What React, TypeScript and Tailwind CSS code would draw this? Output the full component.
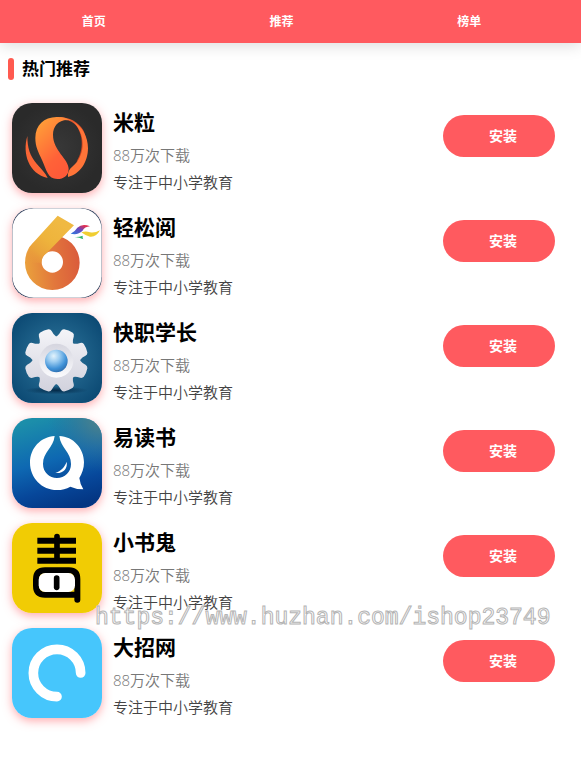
import type { ReactNode } from "react";

interface AppItem {
  name: string;
  downloads: string;
  description: string;
  icon: ReactNode;
}

const gearTeeth = [22.5, 67.5, 112.5, 157.5, 202.5, 247.5, 292.5, 337.5];

const MiliIcon = () => (
  <svg viewBox="12 15 270 270" className="size-full" aria-hidden="true">
    <defs>
      <radialGradient id="mili-bg">
        <stop offset="0" stopColor="#383838" />
        <stop offset="1" stopColor="#2a2a2a" />
      </radialGradient>
      <linearGradient id="mili-blob" x1="0.1" y1="0.1" x2="0.6" y2="1">
        <stop offset="0" stopColor="#ff9d38" />
        <stop offset="0.7" stopColor="#ff6238" />
        <stop offset="1" stopColor="#ff5a38" />
      </linearGradient>
      <linearGradient id="mili-ring" x1="0" y1="0" x2="1" y2="0.3">
        <stop offset="0" stopColor="#ff7a38" />
        <stop offset="0.6" stopColor="#e0522a" />
        <stop offset="1" stopColor="#cf431f" />
      </linearGradient>
    </defs>
    <rect x="12" y="15" width="270" height="270" fill="url(#mili-bg)" />
    <path d="M150 57C185 57 211 72 226 97C236 114 234 160 216 182L205 191C219 170 224 145 220 120C215 92 200 67 172 66Z" fill="url(#mili-ring)" />
    <path d="M196 71C223 84 240 117 240 150C240 192 216 228 180 237C179 222 184 213 195 204C228 177 239 116 196 71Z" fill="#ff7438" />
    <path d="M146 57C160 56 174 59 187 67C154 62 135 84 135 110C135 158 182 183 182 212C182 232 167 243 148 243C119 243 116 216 102 186C91 162 82 146 82 120C82 81 108 58 146 57Z" fill="url(#mili-blob)" />
    <path d="M58 114C42 168 63 227 119 240C112 224 100 213 86 197C66 174 58 150 58 114Z" fill="#fa6636" />
  </svg>
);

const QingsongIcon = () => (
  <svg viewBox="36 24 270 270" className="size-full" aria-hidden="true">
    <defs>
      <linearGradient id="six-ring" x1="0" y1="0.5" x2="1" y2="0.4">
        <stop offset="0" stopColor="#eaa03c" />
        <stop offset="0.5" stopColor="#e2773c" />
        <stop offset="1" stopColor="#da5b3c" />
      </linearGradient>
      <linearGradient id="six-stem" x1="88" y1="190" x2="180" y2="70" gradientUnits="userSpaceOnUse">
        <stop offset="0" stopColor="#e9983b" stopOpacity="0" />
        <stop offset="0.28" stopColor="#eaa33b" />
        <stop offset="0.6" stopColor="#eeb43c" />
        <stop offset="1" stopColor="#f0b942" />
      </linearGradient>
      <linearGradient id="six-wing" x1="0" y1="1" x2="1" y2="0">
        <stop offset="0" stopColor="#2d7be0" />
        <stop offset="0.5" stopColor="#6a49bd" />
        <stop offset="0.8" stopColor="#e02d50" />
      </linearGradient>
    </defs>
    <rect x="36" y="24" width="270" height="270" rx="60" fill="#3b4964" />
    <rect x="37" y="25" width="268" height="268" rx="64" fill="#fff" />
    <path fillRule="evenodd" d="M157 106A82 82 0 1 0 157 270A82 82 0 1 0 157 106ZM157 154A32 32 0 1 1 157 218A32 32 0 1 1 157 154Z" fill="url(#six-ring)" />
    <path d="M173 47L222 76L138 161Q124 170 125 188L75 188Q75 153 96 132Z" fill="url(#six-stem)" />
    <path d="M212 101Q224 96 232 83Q247 69 270 79Q254 80 247 93Q234 106 212 101Z" fill="url(#six-wing)" />
    <path d="M244 97Q258 92 270 97Q284 100 300 91Q289 112 270 110Q256 107 244 97Z" fill="#f0ce31" />
    <path d="M224 111Q237 112 248 107Q247 114 250 118Q238 112 224 111Z" fill="#2bb36b" />
  </svg>
);

const GearIcon = () => (
  <svg viewBox="36 24 270 270" className="size-full" aria-hidden="true">
    <defs>
      <radialGradient id="gear-bg" cx="0.5" cy="0.5" r="0.65">
        <stop offset="0" stopColor="#35799e" />
        <stop offset="0.5" stopColor="#1d6088" />
        <stop offset="1" stopColor="#0a4771" />
      </radialGradient>
      <linearGradient id="gear-metal" x1="0" y1="74" x2="0" y2="258" gradientUnits="userSpaceOnUse">
        <stop offset="0" stopColor="#f4f4f8" />
        <stop offset="1" stopColor="#d2d2dd" />
      </linearGradient>
      <linearGradient id="gear-hub" x1="0" y1="0" x2="0" y2="1">
        <stop offset="0" stopColor="#d5d5df" />
        <stop offset="1" stopColor="#fbfbfd" />
      </linearGradient>
      <radialGradient id="gear-lens" cx="0.38" cy="0.28" r="0.75">
        <stop offset="0" stopColor="#e3f3fc" />
        <stop offset="0.35" stopColor="#9dcdf1" />
        <stop offset="0.75" stopColor="#3f91d7" />
        <stop offset="1" stopColor="#2f6faf" />
      </radialGradient>
      <radialGradient id="gear-shadow">
        <stop offset="0" stopColor="#042a49" />
        <stop offset="1" stopColor="#042a49" stopOpacity="0" />
      </radialGradient>
      <clipPath id="gear-shape">
        <circle cx="169" cy="166" r="72" />
        {gearTeeth.map((angle) => (
          <path
            key={angle}
            transform={`translate(169 166) rotate(${angle})`}
            d="M-30 -62Q-22 -70 -21 -86Q-20 -93 -14 -95Q0 -98 14 -95Q20 -93 21 -86Q22 -70 30 -62Z"
          />
        ))}
      </clipPath>
    </defs>
    <rect x="36" y="24" width="270" height="270" fill="url(#gear-bg)" />
    <ellipse cx="169" cy="256" rx="95" ry="12" fill="url(#gear-shadow)" />
    <rect x="70" y="66" width="200" height="200" fill="url(#gear-metal)" clipPath="url(#gear-shape)" />
    <circle cx="169" cy="167" r="51" fill="url(#gear-hub)" />
    <circle cx="169" cy="168" r="34" fill="url(#gear-lens)" />
  </svg>
);

const YiduIcon = () => (
  <svg viewBox="36 24 270 270" className="size-full" aria-hidden="true">
    <defs>
      <linearGradient id="yidu-bg" x1="0.35" y1="0" x2="0.65" y2="1">
        <stop offset="0" stopColor="#1c8eaa" />
        <stop offset="0.45" stopColor="#0e68b2" />
        <stop offset="0.75" stopColor="#07479a" />
        <stop offset="1" stopColor="#033582" />
      </linearGradient>
      <radialGradient id="yidu-glow" cx="1" cy="0" r="0.6">
        <stop offset="0" stopColor="#568487" />
        <stop offset="1" stopColor="#2d6f98" stopOpacity="0" />
      </radialGradient>
    </defs>
    <rect x="36" y="24" width="270" height="270" fill="url(#yidu-bg)" />
    <rect x="36" y="24" width="270" height="270" fill="url(#yidu-glow)" />
    <path d="M164 78C160 114 129 126 129 162C129 187 148 204 171 204C194 204 213 187 213 162C213 126 182 114 178 78C220 79 252 116 252 157C252 176 246 190 238 204Q240 222 250 238Q228 238 211 230C199 237 186 240 171 240C125 240 90 203 90 158C90 114 123 80 164 78Z" fill="#fff" />
    <path d="M200 155C204 176 188 192 166 189C183 182 194 172 200 155Z" fill="#fff" />
  </svg>
);

const XiaoshuguiIcon = () => (
  <svg viewBox="36 24 270 270" className="size-full" aria-hidden="true">
    <rect x="36" y="24" width="270" height="270" fill="#f1cc04" />
    <path d="M112 68H228V86H112ZM112 98H228V116H112ZM112 128H228V146H112Z" fill="#000" />
    <path d="M171 65V136" stroke="#000" strokeWidth="17" strokeLinecap="round" />
    <path d="M232 254V192Q232 166 207 166H135Q108 166 108 193V212Q108 239 135 239H232" fill="none" stroke="#000" strokeWidth="18" strokeLinecap="round" />
    <rect x="116" y="174" width="109" height="57" rx="20" fill="#fff" />
    <path d="M170 189V217" stroke="#000" strokeWidth="17" strokeLinecap="round" />
  </svg>
);

const DazhaoIcon = () => (
  <svg viewBox="36 24 270 270" className="size-full" aria-hidden="true">
    <rect x="36" y="24" width="270" height="270" fill="#46c6fc" />
    <path d="M242 159A71 71 0 1 0 171 230" fill="none" stroke="#fff" strokeWidth="29" strokeLinecap="round" />
  </svg>
);

const tabs = ["首页", "推荐", "榜单"];

const apps: AppItem[] = [
  { name: "米粒", downloads: "88万次下载", description: "专注于中小学教育", icon: <MiliIcon /> },
  { name: "轻松阅", downloads: "88万次下载", description: "专注于中小学教育", icon: <QingsongIcon /> },
  { name: "快职学长", downloads: "88万次下载", description: "专注于中小学教育", icon: <GearIcon /> },
  { name: "易读书", downloads: "88万次下载", description: "专注于中小学教育", icon: <YiduIcon /> },
  { name: "小书鬼", downloads: "88万次下载", description: "专注于中小学教育", icon: <XiaoshuguiIcon /> },
  { name: "大招网", downloads: "88万次下载", description: "专注于中小学教育", icon: <DazhaoIcon /> },
];

function AppRow({ app }: { app: AppItem }) {
  return (
    <li className="flex items-start pb-3">
      <div className="size-[90px] shrink-0 overflow-hidden rounded-[20px] shadow-[0_3px_10px_rgba(255,90,95,0.5)]">
        {app.icon}
      </div>
      <div className="ml-[11px] min-w-0 flex-1">
        <h2 className="text-[21px] leading-[39px] font-bold text-black">{app.name}</h2>
        <p className="text-[15px] leading-[27px] font-[350] text-[#777]">{app.downloads}</p>
        <p className="text-[15px] leading-[27px] font-[350] text-[#444]">{app.description}</p>
      </div>
      <button
        type="button"
        aria-label={`安装 ${app.name}`}
        className="mt-3 h-[42px] w-28 shrink-0 cursor-pointer rounded-full bg-[#ff5a5f] pl-2 text-sm font-bold text-white"
      >
        安装
      </button>
    </li>
  );
}

export default function App() {
  return (
    <div className="relative min-h-screen bg-white font-['Open_Sans','Noto_Sans_CJK_SC',sans-serif]">
      <header className="bg-[#ff5a5f] pr-[18px] shadow-[0_2px_16px_rgba(0,0,0,0.15)]">
        <nav className="grid grid-cols-3">
          {tabs.map((tab) => (
            <a key={tab} href="#" className="py-3 text-center text-xs leading-[19px] font-bold text-white">
              {tab}
            </a>
          ))}
        </nav>
      </header>

      <main>
        <div className="flex items-center gap-2 px-2 pt-[15px]">
          <span className="h-[22px] w-1.5 rounded-full bg-[#ff5a50]" />
          <h1 className="text-[17px] leading-[22px] font-bold text-black">热门推荐</h1>
        </div>
        <ul className="pt-[23px] pr-[26px] pl-3">
          {apps.map((app) => (
            <AppRow key={app.name} app={app} />
          ))}
        </ul>
      </main>

      <p className="pointer-events-none absolute top-[604px] left-[95px] font-['Liberation_Mono',monospace] text-[23px] leading-7 whitespace-nowrap text-white/60 [-webkit-text-stroke:1px_#b4b4b4]">
        https://www.huzhan.com/ishop23749
      </p>
    </div>
  );
}
